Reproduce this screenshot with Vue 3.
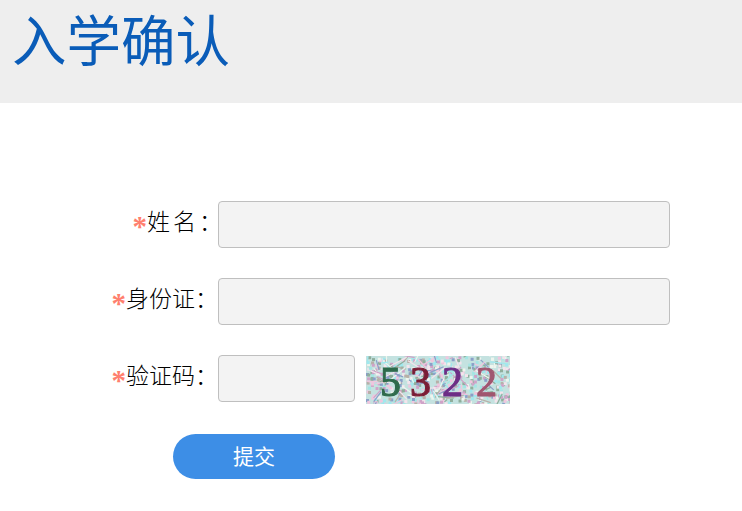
<script setup>
const fields = [
  { label: "姓名：", spaced: true },
  { label: "身份证：" },
];

// 验证码背景的噪点，用固定种子保证每次一样
let seed = 5322;
function rand(n) {
  seed = (seed * 16807) % 2147483647;
  return (seed / 2147483647) * n;
}

const noiseColors = ["#a3e6e4", "#cfa3c8", "#8fae9c", "#f0c6de", "#8a9fc8", "#eef5ee", "#a0e8ee", "#b7b0a8", "#f4e4ec"];

const dots = Array.from({ length: 520 }, (_, i) => ({
  id: i,
  x: rand(144),
  y: rand(48),
  color: noiseColors[Math.floor(rand(noiseColors.length))],
}));

const lines = Array.from({ length: 90 }, (_, i) => {
  const x = rand(144);
  const y = rand(48);
  return {
    id: i,
    x1: x,
    y1: y,
    x2: x + rand(36) - 18,
    y2: y + rand(28) - 14,
    color: noiseColors[Math.floor(rand(noiseColors.length))],
  };
});

const digits = [
  { text: "5", x: 14, color: "#2f6b4c" },
  { text: "3", x: 44, color: "#7a1f35" },
  { text: "2", x: 76, color: "#6d2f86" },
  { text: "2", x: 110, color: "#a0566f" },
];
</script>

<template>
  <div class="page">
    <header class="head">
      <h1 class="title">入学确认</h1>
    </header>

    <form class="form" @submit.prevent>
      <div v-for="f in fields" :key="f.label" class="row">
        <label class="label" :class="{ spaced: f.spaced }"><span class="star">*</span>{{ f.label }}</label>
        <input class="input" type="text" />
      </div>

      <div class="row">
        <label class="label"><span class="star">*</span>验证码：</label>
        <input class="input short" type="text" />
        <svg class="captcha" width="144" height="48" viewBox="0 0 144 48">
          <defs>
            <filter id="soft" x="0" y="0" width="100%" height="100%">
              <feGaussianBlur stdDeviation="0.6" />
            </filter>
          </defs>
          <rect width="144" height="48" fill="#c4e2e0" />
          <g filter="url(#soft)">
            <rect
              v-for="d in dots"
              :key="d.id"
              :x="d.x"
              :y="d.y"
              width="3"
              height="3"
              :fill="d.color"
            />
            <line
              v-for="l in lines"
              :key="l.id"
              :x1="l.x1"
              :y1="l.y1"
              :x2="l.x2"
              :y2="l.y2"
              :stroke="l.color"
              stroke-width="1.2"
            />
            <text
              v-for="(d, i) in digits"
              :key="i"
              :x="d.x"
              y="40"
              :fill="d.color"
              :stroke="d.color"
              stroke-width="1.1"
              class="digit"
            >{{ d.text }}</text>
          </g>
        </svg>
      </div>

      <button class="submit" type="submit">提交</button>
    </form>
  </div>
</template>

<style>
html,
body {
  margin: 0;
  background: #fff;
}
</style>

<style scoped>
.page {
  width: 742px;
  height: 511px;
  overflow: hidden;
  font-family: "Liberation Serif", "Noto Sans CJK SC", serif;
}

.head {
  height: 103px;
  background: #eeeeee;
  padding-left: 12px;
  box-sizing: border-box;
}

.title {
  margin: 0;
  font-family: "Noto Sans CJK SC", sans-serif;
  font-size: 54.5px;
  font-weight: 400;
  line-height: 75px;
  color: #0a5cb8;
}

.form {
  padding-top: 98px;
}

.row {
  display: flex;
  align-items: center;
  height: 47px;
  margin-bottom: 30px;
}

.label {
  width: 218px;
  flex: none;
  padding-bottom: 9px;
  text-align: right;
  font-size: 23px;
  font-weight: 300;
  color: #000;
  white-space: nowrap;
}

.label.spaced {
  width: 225px;
  margin-right: -7px;
  letter-spacing: 3px;
}

.star {
  color: #ff7f6e;
  font-family: "Liberation Serif", serif;
  font-size: 29px;
  font-weight: 700;
  line-height: 0;
  vertical-align: -6px;
  letter-spacing: 0;
}

.input {
  width: 452px;
  height: 47px;
  box-sizing: border-box;
  padding: 0 8px;
  background: #f3f3f3;
  border: 1px solid #bfbfbf;
  border-radius: 4px;
  outline: none;
}

.input.short {
  width: 137px;
}

.captcha {
  margin-left: 11px;
  margin-top: 2px;
  display: block;
}

.digit {
  font-family: "Liberation Serif", serif;
  font-size: 42px;
  font-weight: 400;
}

.submit {
  display: block;
  width: 162px;
  height: 45px;
  margin-left: 173px;
  margin-top: 32px;
  padding: 0 0 3px;
  background: #3d8ee6;
  border: none;
  border-radius: 23px;
  color: #fff;
  font-family: inherit;
  font-size: 21px;
}
</style>
